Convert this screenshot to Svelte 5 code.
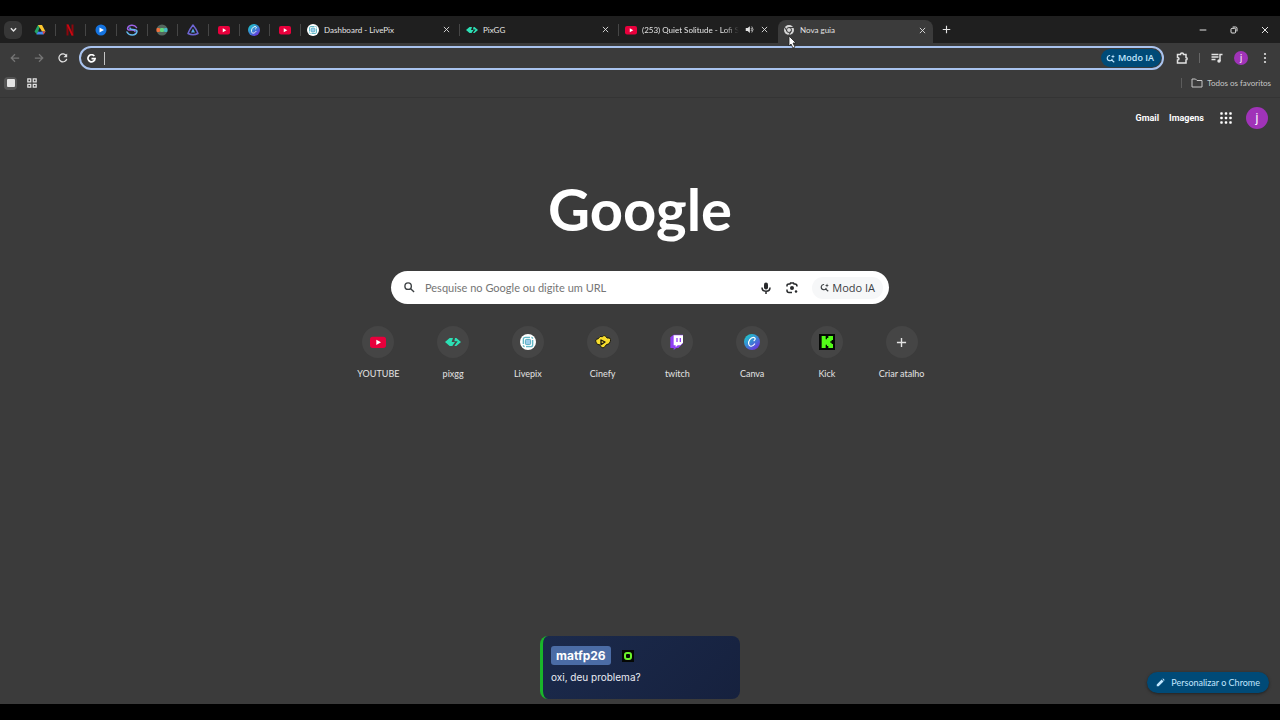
<script lang="ts">
  type Tab = { icon: string; title: string; audio?: boolean; active?: boolean };
  type Shortcut = { icon: string; label: string };

  const pinned = [
    { icon: "drive", label: "Google Drive" },
    { icon: "netflix", label: "Netflix" },
    { icon: "play", label: "Player" },
    { icon: "swirl", label: "Streaming" },
    { icon: "globe", label: "Chat" },
    { icon: "triangle", label: "Overlay" },
    { icon: "youtube", label: "YouTube" },
    { icon: "canva", label: "Canva" },
    { icon: "youtube", label: "YouTube" },
  ];

  const tabs: Tab[] = [
    { icon: "livepix", title: "Dashboard - LivePix" },
    { icon: "pixgg", title: "PixGG" },
    { icon: "youtube", title: "(253) Quiet Solitude - Lofi S", audio: true },
    { icon: "chrome", title: "Nova guia", active: true },
  ];

  const shortcuts: Shortcut[] = [
    { icon: "youtube", label: "YOUTUBE" },
    { icon: "pixgg", label: "pixgg" },
    { icon: "livepix", label: "Livepix" },
    { icon: "cinefy", label: "Cinefy" },
    { icon: "twitch", label: "twitch" },
    { icon: "canva", label: "Canva" },
    { icon: "kick", label: "Kick" },
    { icon: "plus", label: "Criar atalho" },
  ];

  let address = "";
  let query = "";
</script>

{#snippet icon(name: string)}
  <svg class="icon" viewBox="0 0 24 24" aria-hidden="true">
    {#if name === "drive"}
      <path fill="#22a565" d="M8 2h5L6 21 1 15z" />
      <path fill="#fbc52d" d="M8 2h8l7 13h-7z" />
      <path fill="#4586f0" d="M8 15h15l-4 6H5z" />
      <path fill="#ea4335" d="M17 15h6l-4 6z" />
      <path fill="#1f1f1f" d="M12 9l3 6H9z" />
    {:else if name === "netflix"}
      <path fill="#8c060d" d="M5 1h4v22H5zM15 1h4v22h-4z" />
      <path fill="#c90812" d="M5 1h4l10 22h-4z" />
    {:else if name === "play"}
      <circle cx="12" cy="12" r="11" fill="#1473e0" />
      <path fill="#fff" d="M9 7l9 5-9 5z" />
    {:else if name === "swirl"}
      <g fill="none" stroke-width="3" stroke-linecap="round">
        <path stroke="#9c63e8" d="M21 7C17 0 4 1 3 9c0 4 6 3 9 3 4 0 6 1 6 3" />
        <path stroke="#63b7ec" d="M2 16c4 8 18 8 20-1 0-4-5-4-9-4-3 0-5-1-5-3" />
      </g>
    {:else if name === "globe"}
      <circle cx="12" cy="12" r="11" fill="#54665e" />
      <rect x="1" y="8" width="7" height="8" rx="2" fill="#f0713c" />
      <rect x="8" y="8" width="8" height="8" rx="2" fill="#61d67c" />
      <rect x="16" y="8" width="7" height="8" rx="2" fill="#43b8c4" />
    {:else if name === "triangle"}
      <path fill="none" stroke="#6e66d4" stroke-width="3" stroke-linejoin="round" d="M12 2c4 5 8 11 10 17-6 3-14 3-20 0C4 13 8 7 12 2z" />
      <path fill="#59a8e8" d="M12 9l4 8H8z" />
    {:else if name === "youtube"}
      <rect x="0" y="4" width="24" height="17" rx="4" fill="#e8003c" />
      <path fill="#fff" d="M9.500 8.500l7 4-7 4z" />
    {:else if name === "canva"}
      <defs>
        <linearGradient id="canva-fill" x1="0.1" y1="0.1" x2="0.8" y2="1">
          <stop offset="0" stop-color="#20c5cb" />
          <stop offset="0.5" stop-color="#3a83d4" />
          <stop offset="1" stop-color="#7129df" />
        </linearGradient>
      </defs>
      <circle cx="12" cy="12" r="12" fill="url(#canva-fill)" />
      <path fill="none" stroke="#fff" stroke-width="1.800" stroke-linecap="round" d="M15 10c3-2 2-5-1-5-4 0-8 6-7 10 1 5 6 4 9 0" />
    {:else if name === "livepix"}
      <circle cx="12" cy="12" r="12" fill="#fff" />
      <path fill="none" stroke="#62b8c6" stroke-width="2" d="M5 15V8q0-3 3-3h7M19 9v7q0 3-3 3H9M17 5q2 0 2 2M7 19q-2 0-2-2" />
      <rect x="8" y="8" width="8" height="8" rx="2" fill="#9dcdea" stroke="#4aa8bb" stroke-width="1.400" />
    {:else if name === "pixgg"}
      <path fill="#2ce0b5" d="M0 12l7-6h5l-2 6h5l-4 6H7zM24 12l-7 6h-3l5-7h-5l1-5h2z" />
    {:else if name === "chrome"}
      <circle cx="12" cy="12" r="10" fill="#d5d5d5" />
      <g fill="none" stroke="#3c3c3c" stroke-width="2">
        <circle cx="12" cy="12" r="5" />
        <path d="M12 7h10M8 14.500L3 6M16.500 14L11 23" />
      </g>
    {:else if name === "cinefy"}
      <path fill="#f8dd2d" stroke="#181812" stroke-width="1.500" d="M2 13Q-1 8 5 7q2-5 6-3 4-4 7 2 7-1 5 5-1 5-6 5-2 4-5 5-4-1-5-5-4 1-5-3z" />
      <path fill="#f8dd2d" stroke="#181812" stroke-width="2" stroke-linejoin="round" d="M9 9l6 3-6 4z" />
    {:else if name === "twitch"}
      <path fill="#8f3ff4" d="M2 5l5-4h14v13l-7 7h-3l-4 3v-3H2z" />
      <path fill="#fff" d="M7 2h14v11l-4 4h-4l-3 3v-3H7z" />
      <path fill="#8f3ff4" d="M11 6h2v6h-2zM16 6h2v6h-2z" />
    {:else if name === "kick"}
      <path fill="#050805" d="M0 0h24v24H0z" />
      <path fill="#53fc18" d="M4 3h6v5h2V6h2V3h7v6h-2v2h-2v2h2v2h2v6h-7v-3h-2v-2h-2v5H4z" />
    {:else if name === "plus"}
      <path class="line bold" d="M12 2v20M2 12h20" />
    {:else if name === "close"}
      <path class="line bold" d="M3 3l18 18M21 3L3 21" />
    {:else if name === "chevron"}
      <path class="line heavy" d="M3 8l9 9 9-9" />
    {:else if name === "audio"}
      <path fill="currentColor" d="M2 8h5l6-5v18l-6-5H2z" />
      <path class="line" d="M16 8q4 4 0 8M18 4q7 8 0 16" />
    {:else if name === "back"}
      <path class="line bold" d="M22 12H3M12 3l-9 9 9 9" />
    {:else if name === "forward"}
      <path class="line bold" d="M2 12h19M12 3l9 9-9 9" />
    {:else if name === "reload"}
      <path class="line bold" d="M20 7a9.500 9.500 0 1 0 1 7" />
      <path fill="currentColor" d="M22 1v9h-9z" />
    {:else if name === "google"}
      <path fill="none" stroke="#fff" stroke-width="4.500" d="M19.500 5.500A9.500 9.500 0 1 0 21.500 12.500H12" />
    {:else if name === "search"}
      <circle class="line bold" cx="9" cy="9" r="7" />
      <path class="line bold" d="M14 14l8 8" />
    {:else if name === "spark"}
      <path class="line bold" d="M11 4a7 7 0 1 0 6 9M15 16l7 6" />
      <path fill="currentColor" d="M19 1l1 4 4 2-4 1-1 4-2-4-4-1 4-2z" />
    {:else if name === "extension"}
      <path class="line bold" d="M3 5h6c0-4 6-4 6 0h5v6c3 0 3 5 0 5v6H3v-6c4 0 4-5 0-5z" />
    {:else if name === "playlist"}
      <path class="line bold" d="M1 5h14M1 10h14M1 15h8M18 18V5h5" />
      <circle cx="16" cy="18" r="3.500" fill="currentColor" />
    {:else if name === "more"}
      <g fill="currentColor">
        <circle cx="12" cy="4" r="2.200" />
        <circle cx="12" cy="12" r="2.200" />
        <circle cx="12" cy="20" r="2.200" />
      </g>
    {:else if name === "groups"}
      <path class="line bold" d="M2 2h7v7H2zM15 2h7v7h-7zM2 15h7v7H2zM15 15h7v7h-7z" />
    {:else if name === "folder"}
      <path class="line" d="M2 4h7l3 3h10v13H2z" />
    {:else if name === "apps"}
      <g fill="currentColor">
        {#each [3, 12, 21] as y}
          {#each [3, 12, 21] as x}
            <rect x={x - 2.5} y={y - 2.5} width="5" height="5" rx="1.500" />
          {/each}
        {/each}
      </g>
    {:else if name === "mic"}
      <rect x="8" y="1" width="8" height="14" rx="4" fill="currentColor" />
      <path class="line bold" d="M4 11c0 10 16 10 16 0M12 18v6" />
    {:else if name === "lens"}
      <path class="line bold" d="M2 9V7q0-3 4-3h2l1-2h6l1 2h2q4 0 4 5M2 15v2q0 4 4 4h6" />
      <circle cx="12" cy="12" r="4" fill="currentColor" />
      <circle cx="20" cy="19" r="2.500" fill="currentColor" />
    {:else if name === "pencil"}
      <path fill="currentColor" d="M2 17L15 4l5 5L7 22H2zM17 2l2-1 4 4-2 3z" />
    {:else if name === "minimize"}
      <path class="line bold" d="M2 12h20" />
    {:else if name === "restore"}
      <rect class="line bold" x="3" y="7" width="14" height="14" rx="3" />
      <path class="line bold" d="M8 3h9q4 0 4 4v9" />
    {/if}
  </svg>
{/snippet}

<div class="window">
  <header class="strip">
    <button class="tab-search" aria-label="Pesquisar guias">{@render icon("chevron")}</button>
    <nav class="pinned" aria-label="Guias fixadas">
      {#each pinned as tab}
        <button class="pin" aria-label={tab.label}>{@render icon(tab.icon)}</button>
      {/each}
    </nav>
    {#each tabs as tab}
      <div class="tab" class:active={tab.active}>
        {@render icon(tab.icon)}
        <button class="title" class:fade={tab.audio}>{tab.title}</button>
        {#if tab.audio}
          <button class="small" aria-label="Desativar som">{@render icon("audio")}</button>
        {/if}
        <button class="small close" aria-label="Fechar">{@render icon("close")}</button>
      </div>
    {/each}
    <button class="new-tab" aria-label="Nova guia">{@render icon("plus")}</button>
    <div class="controls">
      <button aria-label="Minimizar">{@render icon("minimize")}</button>
      <button aria-label="Restaurar">{@render icon("restore")}</button>
      <button aria-label="Fechar janela">{@render icon("close")}</button>
    </div>
  </header>

  <div class="toolbar">
    <button class="tool off" aria-label="Voltar">{@render icon("back")}</button>
    <button class="tool off" aria-label="Avançar">{@render icon("forward")}</button>
    <button class="tool" aria-label="Recarregar">{@render icon("reload")}</button>
    <div class="omnibox">
      {@render icon("google")}
      <span class="caret"></span>
      <input aria-label="Barra de endereço" bind:value={address} />
      <button class="ai">{@render icon("spark")}Modo IA</button>
    </div>
    <div class="actions">
      <button class="tool" aria-label="Extensões">{@render icon("extension")}</button>
      <span class="rule"></span>
      <button class="tool" aria-label="Mídia">{@render icon("playlist")}</button>
      <button class="avatar" aria-label="Perfil">j</button>
      <button class="tool" aria-label="Menu">{@render icon("more")}</button>
    </div>
  </div>

  <div class="bookmarks">
    <button class="saved" aria-label="Favorito"><span></span></button>
    <button class="tool" aria-label="Grupos de guias">{@render icon("groups")}</button>
    <button class="all"><span class="rule"></span>{@render icon("folder")}Todos os favoritos</button>
  </div>

  <main>
    <nav class="links" aria-label="Google">
      <a href="#gmail">Gmail</a>
      <a href="#imagens">Imagens</a>
      <button class="apps" aria-label="Google Apps">{@render icon("apps")}</button>
      <button class="avatar large" aria-label="Conta">j</button>
    </nav>

    <h1>Google</h1>

    <form class="search" on:submit|preventDefault>
      {@render icon("search")}
      <input aria-label="Pesquisar" placeholder="Pesquise no Google ou digite um URL" bind:value={query} />
      <button type="button" class="voice" aria-label="Pesquisa por voz">{@render icon("mic")}</button>
      <button type="button" class="voice" aria-label="Pesquisa por imagem">{@render icon("lens")}</button>
      <button type="button" class="mode">{@render icon("spark")}Modo IA</button>
    </form>

    <div class="shortcuts">
      {#each shortcuts as item}
        <a href="#{item.icon}">
          <span class="tile" class:add={item.icon === "plus"}>{@render icon(item.icon)}</span>
          {item.label}
        </a>
      {/each}
    </div>
  </main>

  <button class="customize">{@render icon("pencil")}Personalizar o Chrome</button>

  <aside class="chat">
    <div class="author">
      <strong>matfp26</strong>
      <svg viewBox="0 0 12 12" aria-hidden="true">
        <path fill="#050805" d="M0 0h12v12H0z" />
        <rect x="3" y="3" width="6" height="6" rx="2" fill="none" stroke="#6bf52b" stroke-width="2" />
      </svg>
    </div>
    <p>oxi, deu problema?</p>
  </aside>

  <svg class="pointer" viewBox="0 0 9 14" aria-hidden="true">
    <path fill="#fff" stroke="#222" stroke-width="0.800" d="M1 1v10l2-2 2 4 2-1-2-4h3z" />
  </svg>
</div>

<style>
  :global(body) {
    background: #000;
  }

  .window {
    position: relative;
    display: flex;
    flex-direction: column;
    box-sizing: border-box;
    min-height: calc(100vh - 32px);
    margin: 16px 0;
    background: #3b3b3b;
    color: #e3e3e3;
    font-family: Lato, "Open Sans", sans-serif;
    font-size: 9px;
    line-height: 12px;
  }

  button,
  input {
    margin: 0;
    padding: 0;
    border: 0;
    background: none;
    color: inherit;
    font: inherit;
  }

  button {
    display: flex;
    align-items: center;
    justify-content: center;
    white-space: nowrap;
    cursor: pointer;
  }

  input {
    flex: 1;
    min-width: 0;
    outline: 0;
  }

  a {
    color: inherit;
    text-decoration: none;
  }

  .icon {
    display: block;
    flex: none;
    width: 12px;
    height: 12px;
  }

  .line {
    fill: none;
    stroke: currentColor;
    stroke-width: 2;
  }

  .bold {
    stroke-width: 3;
  }

  .heavy {
    stroke-width: 5;
  }

  .strip {
    display: flex;
    align-items: center;
    height: 27px;
    background: #1f1f1f;
    font-size: 8px;
  }

  .tab-search {
    width: 18px;
    height: 18px;
    margin: 0 3px 0 4px;
    border-radius: 6px;
    background: #373737;
  }

  .tab-search .icon {
    width: 7px;
    height: 7px;
  }

  .pinned {
    display: grid;
    grid-template-columns: repeat(9, 1fr);
    width: 276px;
  }

  .pin {
    height: 12px;
    border-right: 1px solid #464646;
  }

  .tab {
    display: flex;
    align-items: center;
    box-sizing: border-box;
    width: 159px;
    height: 12px;
    padding: 0 8px 0 6px;
    border-right: 1px solid #464646;
  }

  .tab:has(+ .active) {
    border-color: transparent;
  }

  .tab.active {
    align-self: flex-end;
    width: 155px;
    height: 23px;
    padding: 0 6px 3px 5px;
    border: 0;
    border-radius: 8px 8px 0 0;
    background: #3b3b3b;
  }

  .title {
    flex: 1;
    min-width: 0;
    margin-left: 5px;
    justify-content: flex-start;
  }

  .fade {
    mask-image: linear-gradient(to right, #000 85%, transparent);
  }

  .small {
    width: 10px;
    height: 12px;
    margin-left: 5px;
  }

  .small .icon {
    width: 9px;
    height: 9px;
  }

  .close .icon {
    width: 7px;
    height: 7px;
  }

  .new-tab {
    width: 26px;
    height: 20px;
  }

  .new-tab .icon {
    width: 9px;
    height: 9px;
  }

  .controls {
    display: flex;
    margin-left: auto;
  }

  .controls button {
    width: 31px;
    height: 26px;
  }

  .controls .icon {
    width: 8px;
    height: 8px;
  }

  .toolbar {
    display: flex;
    align-items: center;
    height: 30px;
    padding: 0 5px 0 3px;
  }

  .tool {
    width: 24px;
    height: 20px;
  }

  .tool .icon {
    width: 10px;
    height: 10px;
  }

  .off {
    color: #757575;
  }

  .omnibox {
    display: flex;
    flex: 1;
    align-items: center;
    box-sizing: border-box;
    height: 24px;
    margin-left: 4px;
    padding: 0 1px 0 6px;
    border: 2px solid #a9c3ee;
    border-radius: 12px;
  }

  .omnibox > .icon {
    width: 9px;
    height: 9px;
  }

  .caret {
    width: 1px;
    height: 13px;
    margin-left: 8px;
    background: #c4c4c4;
  }

  .ai {
    gap: 3px;
    height: 18px;
    padding: 0 7px 0 5px;
    border-radius: 9px;
    background: #004a77;
    color: #c2e7ff;
    font-family: "Open Sans", sans-serif;
    font-weight: 600;
  }

  .ai .icon {
    width: 9px;
    height: 9px;
  }

  .actions {
    display: flex;
    align-items: center;
    margin-left: 6px;
  }

  .actions .icon {
    width: 12px;
    height: 12px;
  }

  .rule {
    width: 1px;
    height: 10px;
    margin: 0 5px;
    background: #666;
  }

  .avatar {
    width: 14px;
    height: 14px;
    border-radius: 50%;
    background: #a033b8;
    color: #fff;
  }

  .actions .avatar {
    margin: 0 7px 0 5px;
  }

  .actions .tool:last-child {
    width: 20px;
  }

  .bookmarks {
    display: flex;
    align-items: center;
    height: 20px;
    margin-bottom: 4px;
    padding: 0 9px 0 4px;
    font-size: 8px;
  }

  .saved {
    width: 13px;
    height: 13px;
    margin-right: 3px;
    border-radius: 4px;
    background: #555;
  }

  .saved span {
    width: 8px;
    height: 8px;
    border-radius: 1px;
    background: #e4e4e4;
  }

  .all {
    gap: 4px;
    margin-left: auto;
    color: #c7c7c7;
  }

  .all .rule {
    background: #5c5c5c;
  }

  main {
    display: flex;
    flex: 1;
    flex-direction: column;
    align-items: center;
    border-top: 1px solid #343434;
  }

  .links {
    display: flex;
    align-items: center;
    align-self: flex-end;
    gap: 10px;
    margin: 9px 12px 0 0;
    color: #fff;
    font-family: Roboto, "Liberation Sans", sans-serif;
    font-weight: 700;
  }

  .apps {
    width: 20px;
    height: 20px;
    margin-left: 2px;
  }

  .large {
    width: 22px;
    height: 22px;
    font-size: 12px;
    font-weight: 400;
  }

  h1 {
    margin: 44px 0 0;
    color: #fff;
    font-family: Lato, sans-serif;
    font-size: 58px;
    font-weight: 700;
    line-height: 72px;
  }

  .search {
    display: flex;
    align-items: center;
    box-sizing: border-box;
    width: 498px;
    max-width: 100%;
    height: 33px;
    margin-top: 26px;
    padding: 0 6px 0 13px;
    border-radius: 17px;
    background: #fff;
    color: #3c4043;
    font-size: 11px;
  }

  .search > .icon {
    width: 11px;
    height: 11px;
    margin-right: 10px;
  }

  .search input {
    height: 20px;
  }

  .search input::placeholder {
    color: #757575;
    opacity: 1;
  }

  .voice {
    width: 26px;
    height: 24px;
    color: #27292b;
  }

  .mode {
    gap: 3px;
    height: 22px;
    margin-left: 7px;
    padding: 0 8px;
    border-radius: 11px;
    background: #f6f7f8;
    font-family: "Open Sans", sans-serif;
  }

  .mode .icon {
    width: 9px;
    height: 9px;
  }

  .shortcuts {
    display: grid;
    grid-template-columns: repeat(8, 1fr);
    width: 598px;
    max-width: 100%;
    margin-top: 22px;
  }

  .shortcuts a {
    display: flex;
    flex-direction: column;
    align-items: center;
    gap: 10px;
  }

  .tile {
    display: grid;
    place-items: center;
    width: 32px;
    height: 32px;
    border-radius: 50%;
    background: #454545;
  }

  .tile .icon {
    width: 16px;
    height: 16px;
  }

  .add .icon {
    width: 11px;
    height: 11px;
  }

  .customize {
    position: absolute;
    right: 11px;
    bottom: 11px;
    gap: 6px;
    height: 21px;
    padding: 0 9px;
    border-radius: 11px;
    background: #004a77;
    color: #c2e7ff;
    box-shadow: 0 1px 3px #222;
  }

  .customize .icon {
    width: 9px;
    height: 9px;
  }

  .chat {
    position: absolute;
    bottom: 5px;
    left: 50%;
    box-sizing: border-box;
    width: 200px;
    min-height: 63px;
    margin-left: -100px;
    padding: 10px 8px;
    border-left: 3px solid #19b52a;
    border-radius: 8px;
    background: linear-gradient(135deg, #1b2a4c, #16213e);
    color: #e9ecf3;
    font-family: Inter, sans-serif;
    font-size: 10px;
    line-height: 16px;
  }

  .author {
    display: flex;
    align-items: center;
    gap: 11px;
  }

  .author strong {
    padding: 1px 5px;
    border-radius: 3px;
    background: #4b6ca5;
    color: #fff;
    font-size: 12px;
    line-height: 17px;
  }

  .author svg {
    width: 12px;
    height: 12px;
  }

  .chat p {
    margin: 4px 0 0;
  }

  .pointer {
    position: absolute;
    top: 19px;
    left: 788px;
    width: 9px;
    height: 14px;
  }
</style>
